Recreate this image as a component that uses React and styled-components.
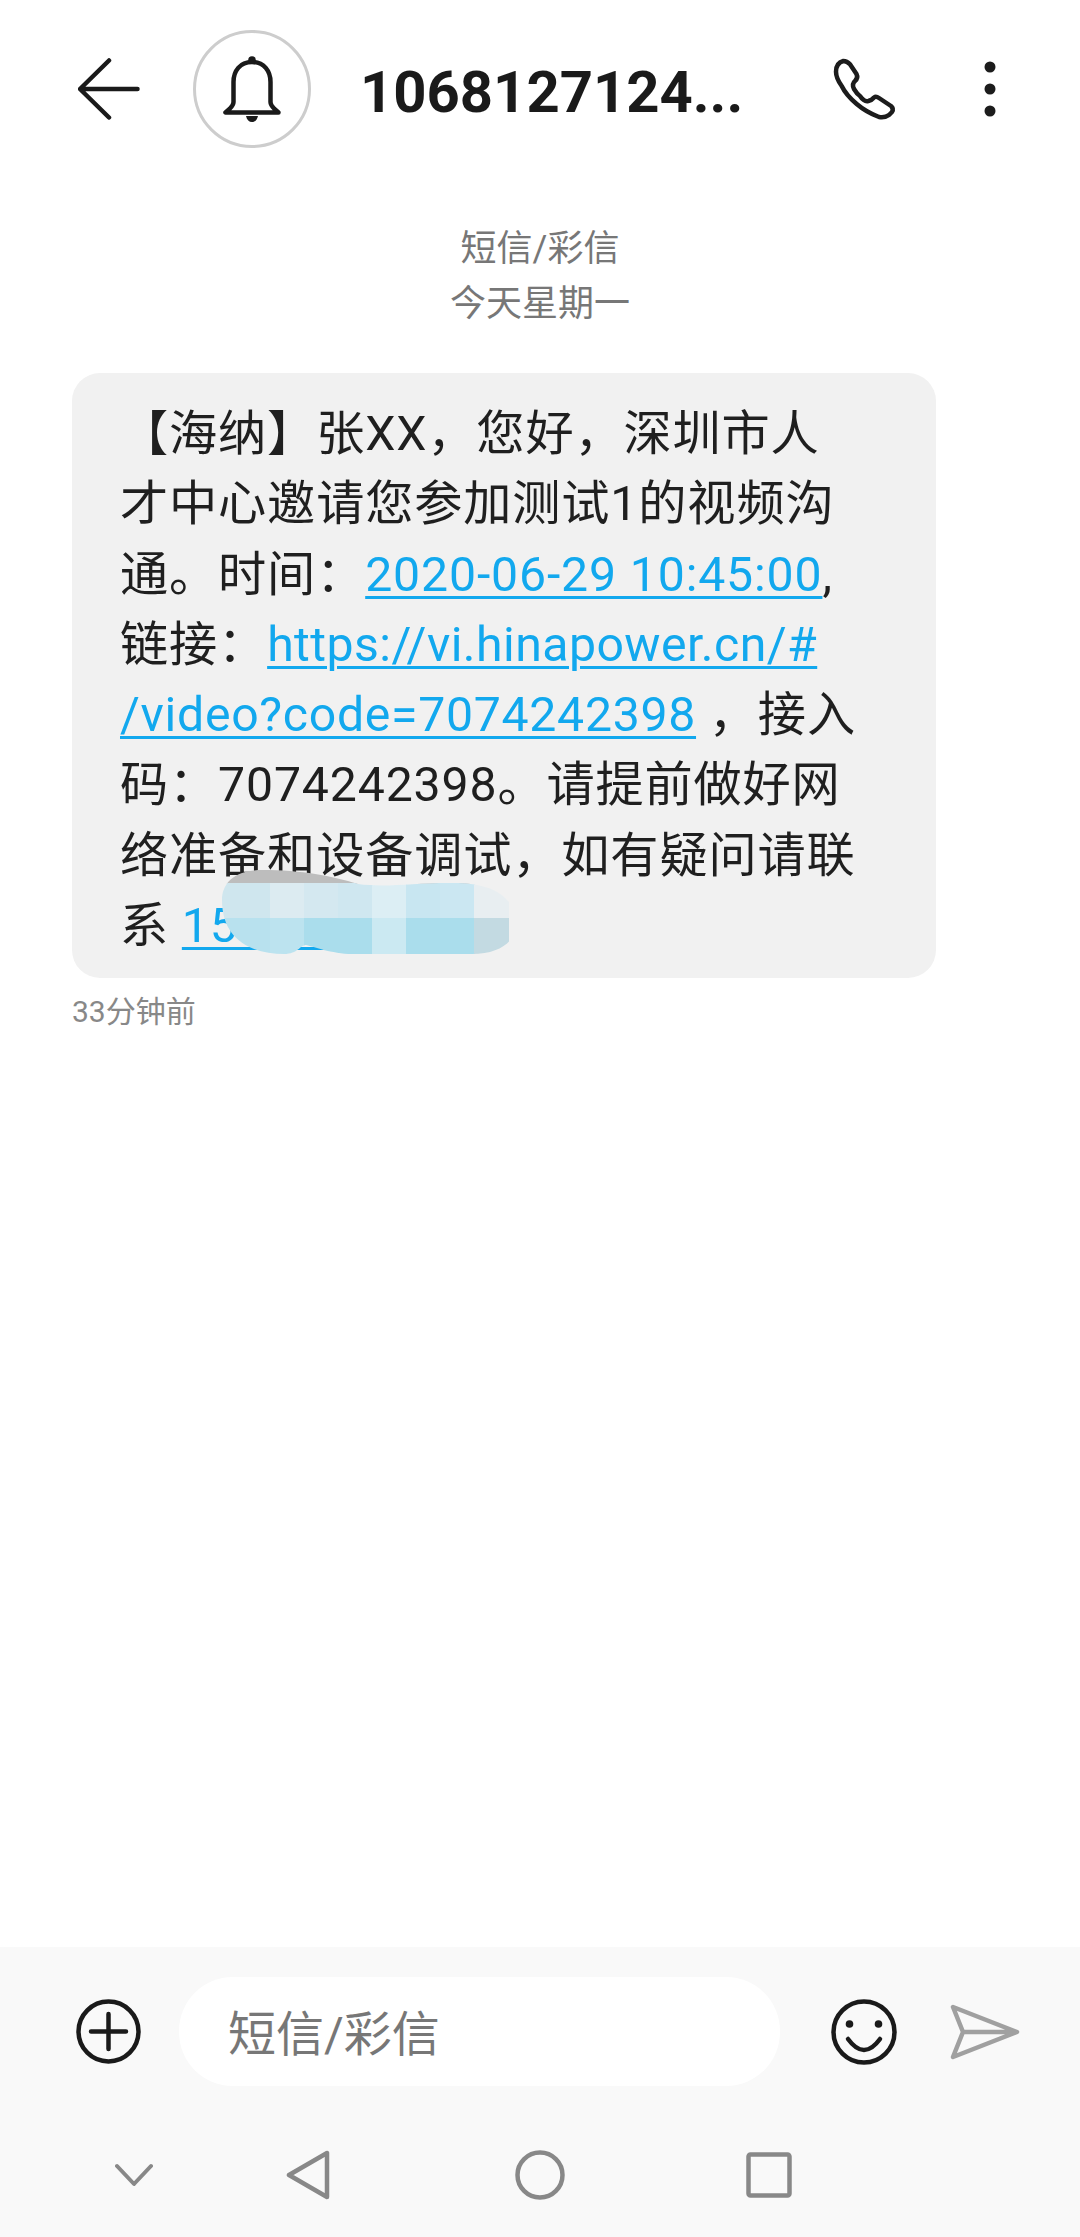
import React from "react";
import styled, { createGlobalStyle } from "styled-components";

const Global = createGlobalStyle`
  html, body { margin: 0; padding: 0; background: #fff; }
  body { font-family: Roboto, "Noto Sans CJK SC", sans-serif; }
`;

const Screen = styled.div`
  width: 1080px;
  height: 2237px;
  display: flex;
  flex-direction: column;
  background: #fff;
  overflow: hidden;
`;

const Header = styled.header`
  height: 178px;
  flex: none;
  display: flex;
  align-items: center;
  padding: 0 0 0 78px;
  box-sizing: border-box;
`;

const Avatar = styled.div`
  width: 118px;
  height: 118px;
  box-sizing: border-box;
  margin-left: 53px;
  border: 3px solid #cdcdcd;
  border-radius: 50%;
  display: flex;
  align-items: center;
  justify-content: center;
  flex: none;
`;

const Title = styled.h1`
  margin: 0 0 0 49px;
  padding-top: 6px;
  width: 470px;
  font-size: 58px;
  font-weight: 700;
  color: #1a1a1a;
  white-space: nowrap;
  line-height: 1;
`;

const HeaderActions = styled.div`
  display: flex;
  align-items: center;
  gap: 83px;
`;

const Main = styled.main`
  flex: 1;
  min-height: 0;
  display: flex;
  flex-direction: column;
  padding: 0 72px;
`;

const Stamp = styled.div`
  align-self: center;
  text-align: center;
  font-size: 36px;
  line-height: 55px;
  color: #777;
  margin-top: 44px;
`;

const Bubble = styled.div`
  position: relative;
  width: 864px;
  height: 605px;
  margin-top: 41px;
  box-sizing: border-box;
  padding: 26px 0 0 48px;
  background: #f1f1f1;
  border-radius: 28px;
  font-size: 48.2px;
  letter-spacing: 0.85px;
  line-height: 70.3px;
  color: #1f1f1f;
  white-space: nowrap;
`;

const Link = styled.span`
  color: #12a8ee;
  letter-spacing: ${(p) => p.$track}px;
  text-decoration: underline;
  text-decoration-thickness: 3px;
  text-underline-offset: 5px;
`;

const Mosaic = styled.svg`
  position: absolute;
  left: 150px;
  top: 497px;
`;

const Age = styled.div`
  font-size: 30px;
  line-height: 36px;
  color: #888;
  margin-top: 16px;
`;

const Composer = styled.div`
  flex: none;
  background: #f9f9f9;
  height: 290px;
  display: flex;
  flex-direction: column;
`;

const InputRow = styled.div`
  display: flex;
  align-items: center;
  padding: 30px 0 0 76px;
`;

const Field = styled.div`
  width: 601px;
  height: 109px;
  margin-left: 38px;
  margin-right: 51px;
  background: #fff;
  border-radius: 54px;
  box-sizing: border-box;
  padding: 0 0 4px 49px;
  display: flex;
  align-items: center;
  font-size: 48px;
  color: #777;
`;

const SendSlot = styled.div`
  margin-left: 53px;
  display: flex;
`;

const NavRow = styled.nav`
  display: flex;
  align-items: center;
  margin-top: 64px;
  height: 50px;
  padding-left: 115px;
`;

const NavSlot = styled.div`
  width: ${(p) => p.$w}px;
  display: flex;
`;

const Back = () => (
  <svg width="62" height="62" viewBox="0 0 62 62" fill="none" stroke="#1a1a1a" strokeWidth="4.5" strokeLinecap="round" strokeLinejoin="round">
    <path d="M31 2.5 2 31l29 28.5M3 31h56.5" />
  </svg>
);

const Bell = () => (
  <svg width="60" height="68" viewBox="0 0 60 68" fill="none" stroke="#1a1a1a" strokeWidth="4.5" strokeLinejoin="round">
    <path d="M30 7C18 7 11.5 16 11.5 27v20c0 3-2 5-4 7l-4 3.5h53l-4-3.5c-2-2-4-4-4-7V27C48.5 16 42 7 30 7z" />
    <circle cx="30" cy="5" r="3.8" fill="#1a1a1a" stroke="none" />
    <path d="M24 61h12c-1 4-3 6-6 6s-5-2-6-6z" fill="#1a1a1a" stroke="none" />
  </svg>
);

const Phone = () => (
  <svg width="70" height="70" viewBox="0 0 70 70" fill="none" stroke="#1c1c1c" strokeWidth="4.5" strokeLinejoin="round">
    <path d="M13.3 7Q17 7 20 10.3L26.5 20Q28.5 24 25 27Q21.5 30 24 35Q27 40 30 42Q34 48 38.3 47Q42 46 44 43.5Q46 42 49 44L61 52Q64 54.5 62 58L59 61Q55 64 49 63Q36 58 26.7 50Q16 41 11.7 32Q6 24 6 17.7Q6 9 13.3 7z" />
  </svg>
);

const Dots = () => (
  <svg width="14" height="58" viewBox="0 0 14 58" fill="#1c1c1c">
    <circle cx="7" cy="7" r="5.5" />
    <circle cx="7" cy="29" r="5.5" />
    <circle cx="7" cy="51" r="5.5" />
  </svg>
);

const Plus = () => (
  <svg width="65" height="65" viewBox="0 0 65 65" fill="none" stroke="#1a1a1a" strokeWidth="4.5">
    <circle cx="32.5" cy="32.5" r="30" />
    <path d="M32.5 15v35M15 32.5h35" strokeLinecap="round" />
  </svg>
);

const Smile = () => (
  <svg width="66" height="66" viewBox="0 0 66 66" fill="none" stroke="#1a1a1a" strokeWidth="4.5">
    <circle cx="33" cy="33" r="30.5" />
    <circle cx="18.5" cy="25" r="3.8" fill="#1a1a1a" stroke="none" />
    <circle cx="47.5" cy="25" r="3.8" fill="#1a1a1a" stroke="none" />
    <path d="M17 40Q33 62 49 40" strokeLinecap="round" />
  </svg>
);

const Send = () => (
  <svg width="70" height="56" viewBox="0 0 70 56" fill="none" stroke="#a0a0a0" strokeWidth="4.5" strokeLinejoin="round">
    <path d="M3 3l64 25-64 25 10-25zM13 28h54" />
  </svg>
);

const Chevron = () => (
  <svg width="38" height="24" viewBox="0 0 38 24" fill="none" stroke="#888" strokeWidth="4" strokeLinecap="round" strokeLinejoin="round">
    <path d="M2 3l17 18L36 3" />
  </svg>
);

const Triangle = () => (
  <svg width="44" height="50" viewBox="0 0 44 50" fill="none" stroke="#888" strokeWidth="4.5" strokeLinejoin="round">
    <path d="M41 3v44L3 25z" />
  </svg>
);

const Ring = () => (
  <svg width="50" height="50" viewBox="0 0 50 50" fill="none" stroke="#888" strokeWidth="4.5">
    <circle cx="25" cy="25" r="22.5" />
  </svg>
);

const SquareIcon = () => (
  <svg width="46" height="46" viewBox="0 0 46 46" fill="none" stroke="#888" strokeWidth="4.5" strokeLinejoin="round">
    <rect x="2.5" y="2.5" width="41" height="41" rx="2" />
  </svg>
);

const topRow = ["#cfe6ee", "#dcebf1", "#d4e8f0", "#cfe7f0", "#dceef4", "#c8e6f1", "#cbe7f2", "#e8eef1"];
const bottomRow = ["#b8e1ee", "#bce3ef", "#aaddec", "#aaddec", "#cbe9f2", "#aaddec", "#aaddec", "#c3dae2"];

const PixelMask = () => (
  <Mosaic width="296" height="84" viewBox="0 0 296 84">
    <defs>
      <clipPath id="blob">
        <path d="M0 30C0 12 14 0 40 0c40 0 70 6 96 14 30 4 60-2 100-1 30 1 52 10 58 34 4 20-12 37-44 37H130c-20 0-40-8-46-9-6 0-8 9-22 9C30 84 0 70 0 30z" />
      </clipPath>
    </defs>
    <g clipPath="url(#blob)">
      <rect width="296" height="14" fill="#bdbdbd" />
      {topRow.map((c, i) => (
        <rect key={i} x={i * 34 + (i ? 14 : 0)} y="13" width={i ? 35 : 49} height="35" fill={c} />
      ))}
      {bottomRow.map((c, i) => (
        <rect key={i} x={i * 34 + (i ? 14 : 0)} y="48" width={i ? 35 : 49} height="36" fill={c} />
      ))}
    </g>
  </Mosaic>
);

export default function App() {
  return (
    <Screen>
      <Global />
      <Header>
        <Back />
        <Avatar>
          <Bell />
        </Avatar>
        <Title>1068127124...</Title>
        <HeaderActions>
          <Phone />
          <Dots />
        </HeaderActions>
      </Header>
      <Main>
        <Stamp>
          短信/彩信
          <br />
          今天星期一
        </Stamp>
        <Bubble>
          【海纳】张XX，您好，深圳市人
          <br />
          才中心邀请您参加测试1的视频沟
          <br />
          通。时间：<Link $track={0.85}>2020-06-29 10:45:00</Link>,
          <br />
          链接：<Link $track={0.45}>https://vi.hinapower.cn/#</Link>
          <br />
          <Link $track={0.7}>/video?code=7074242398</Link> ，接入
          <br />
          码：7074242398。请提前做好网
          <br />
          络准备和设备调试，如有疑问请联
          <br />
          系 <Link $track={0.85}>15900000000</Link>,
          <PixelMask />
        </Bubble>
        <Age>33分钟前</Age>
      </Main>
      <Composer>
        <InputRow>
          <Plus />
          <Field>短信/彩信</Field>
          <Smile />
          <SendSlot>
            <Send />
          </SendSlot>
        </InputRow>
        <NavRow>
          <NavSlot $w={171}>
            <Chevron />
          </NavSlot>
          <NavSlot $w={229}>
            <Triangle />
          </NavSlot>
          <NavSlot $w={231}>
            <Ring />
          </NavSlot>
          <NavSlot $w={46}>
            <SquareIcon />
          </NavSlot>
        </NavRow>
      </Composer>
    </Screen>
  );
}
